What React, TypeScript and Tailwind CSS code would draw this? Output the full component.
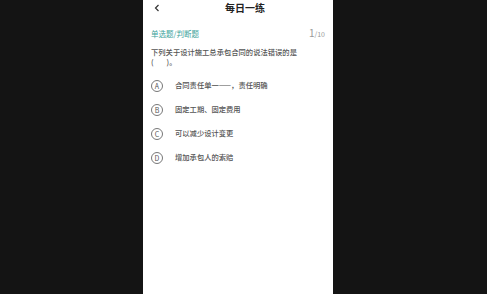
const OPTIONS = [
  { key: "A", text: "合同责任单一——，责任明确" },
  { key: "B", text: "固定工期、固定费用" },
  { key: "C", text: "可以减少设计变更" },
  { key: "D", text: "增加承包人的索赔" },
];

export default function App() {
  return (
    <div
      className="w-[487px] h-[294px] bg-[#141414] flex overflow-hidden"
      style={{ fontFamily: '"Noto Sans CJK SC", "Noto Sans", sans-serif' }}
    >
      <div className="ml-[143px] w-[190px] h-full bg-white flex flex-col">
        <div className="h-[17px] relative flex items-center justify-center">
          <svg
            className="absolute left-[10px] top-[4px]"
            width="8"
            height="8"
            viewBox="0 0 8 8"
            fill="none"
            stroke="#333"
            strokeWidth="1.2"
          >
            <path d="M5.5 1 L2.5 4 L5.5 7" />
          </svg>
          <span className="ml-[14px] text-[10px] font-semibold text-[#222] leading-none mt-[-2px]">每日一练</span>
        </div>

        <div className="mt-[5px] px-[8px] flex items-end justify-between">
          <span className="text-[7.5px] text-[#3aa39b] leading-none mb-[1px]">单选题/判断题</span>
          <span className="text-[#999] leading-none">
            <span className="text-[10px]">1</span>
            <span className="text-[7px]">/10</span>
          </span>
        </div>

        <div className="mt-[9px] px-[8px] text-[7.3px] leading-[10px] text-[#555] font-medium">
          下列关于设计施工总承包合同的说法错误的是
          <br />
          (<span className="inline-block w-[13px]" />)。
        </div>

        <div className="mt-[13px] flex flex-col gap-[12px] px-[8px]">
          {OPTIONS.map(({ key, text }) => (
            <div key={key} className="flex items-center h-[12px]">
              <div className="w-[12px] h-[12px] rounded-full border border-[#777] flex items-center justify-center text-[7px] text-[#555] leading-none">
                {key}
              </div>
              <span className="ml-[12px] text-[7.3px] text-[#555] font-medium leading-none">{text}</span>
            </div>
          ))}
        </div>
      </div>
    </div>
  );
}
